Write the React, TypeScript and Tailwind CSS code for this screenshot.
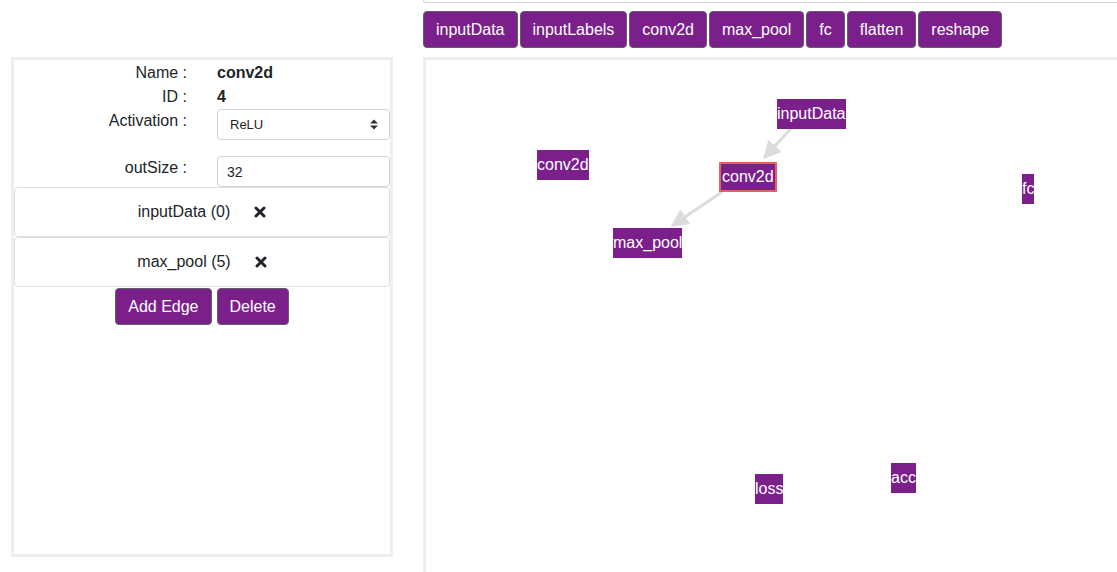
const layerTypes = ["inputData", "inputLabels", "conv2d", "max_pool", "fc", "flatten", "reshape"];

const nodes = [
  { label: "inputData", x: 351, y: 39, selected: false },
  { label: "conv2d", x: 111, y: 90, selected: false },
  { label: "conv2d", x: 293, y: 102, selected: true },
  { label: "max_pool", x: 187, y: 168, selected: false },
  { label: "fc", x: 596, y: 114, selected: false },
  { label: "loss", x: 329, y: 414, selected: false },
  { label: "acc", x: 465, y: 403, selected: false },
];

const edges = ["inputData (0)", "max_pool (5)"];

function Times() {
  return (
    <svg width="12" height="12" viewBox="0 0 12 12">
      <path d="M2 2 L10 10 M10 2 L2 10" stroke="#212529" strokeWidth="3" strokeLinecap="round" />
    </svg>
  );
}

function Field({ label, children }: { label: string; children: React.ReactNode }) {
  return (
    <div className="grid grid-cols-[173px_1fr] gap-x-[30px]">
      <div className="text-right leading-6">{label}</div>
      <div>{children}</div>
    </div>
  );
}

export default function App() {
  return (
    <div className="w-[1117px] h-[572px] overflow-hidden bg-white text-[#212529] font-['Liberation_Sans',Arial,sans-serif] text-base">
      <div className="flex pl-[11px] gap-[30px]">
        {/* properties panel */}
        <div className="w-[382px] shrink-0 mt-[57px] h-[500px] border-[3px] border-[#eeeeee] flex flex-col">
          <div className="pt-[1px]">
            <Field label="Name :">
              <span className="font-bold leading-6">conv2d</span>
            </Field>
            <Field label="ID :">
              <span className="font-bold leading-6">4</span>
            </Field>
            <Field label="Activation :">
              <div className="h-[31px] border border-[#ced4da] rounded-[4px] flex items-center justify-between pl-3 pr-[11px] text-[13px]">
                <span>ReLU</span>
                <svg width="8" height="11" viewBox="0 0 8 11">
                  <path d="M0 4.5 L4 0.5 L8 4.5 Z M0 6.5 L4 10.5 L8 6.5 Z" fill="#333" />
                </svg>
              </div>
            </Field>
            <div className="h-4" />
            <Field label="outSize :">
              <div className="h-[31px] border border-[#ced4da] rounded-[4px] flex items-center pl-[9px] text-sm">32</div>
            </Field>
          </div>
          {edges.map((e) => (
            <div key={e} className="h-[50px] border border-[#dfdfdf] rounded-[4px] flex items-center justify-center gap-6">
              <span>{e}</span>
              <Times />
            </div>
          ))}
          <div className="flex justify-center gap-[5px] mt-[1px]">
            <button className="h-[37px] px-3 bg-[#7b1f8b] text-white border border-[#5f5f6a] rounded-[4px]">Add Edge</button>
            <button className="h-[37px] px-3 bg-[#7b1f8b] text-white border border-[#5f5f6a] rounded-[4px]">Delete</button>
          </div>
        </div>

        {/* graph column */}
        <div className="w-[720px] shrink-0">
          <div className="h-[3px] border border-t-0 border-[#ced4da] rounded-b-[4px]" />
          <div className="flex gap-[2px] mt-[8px]">
            {layerTypes.map((t) => (
              <button key={t} className="h-[37px] px-3 bg-[#7b1f8b] text-white border border-[#5f5f6a] rounded-[4px]">
                {t}
              </button>
            ))}
          </div>
          <div className="relative mt-[9px] h-[560px] border-[3px] border-[#eeeeee]">
            <svg className="absolute inset-0" width="720" height="560">
              <defs>
                <marker id="ah" markerWidth="6" markerHeight="6" refX="5" refY="3" orient="auto">
                  <path d="M0 0 L6 3 L0 6 Z" fill="#dcdcdc" />
                </marker>
              </defs>
              <line x1="368" y1="65" x2="339" y2="97" stroke="#dcdcdc" strokeWidth="3" markerEnd="url(#ah)" />
              <line x1="296" y1="132" x2="247" y2="165" stroke="#dcdcdc" strokeWidth="3" markerEnd="url(#ah)" />
            </svg>
            {nodes.map((n, i) => (
              <div
                key={i}
                className={
                  "absolute h-[30px] flex items-center bg-[#7b1f8b] text-white leading-none " +
                  (n.selected ? "border-2 border-[#e4625d] px-[1px]" : "")
                }
                style={{ left: n.x, top: n.y }}
              >
                {n.label}
              </div>
            ))}
          </div>
        </div>
      </div>
    </div>
  );
}
